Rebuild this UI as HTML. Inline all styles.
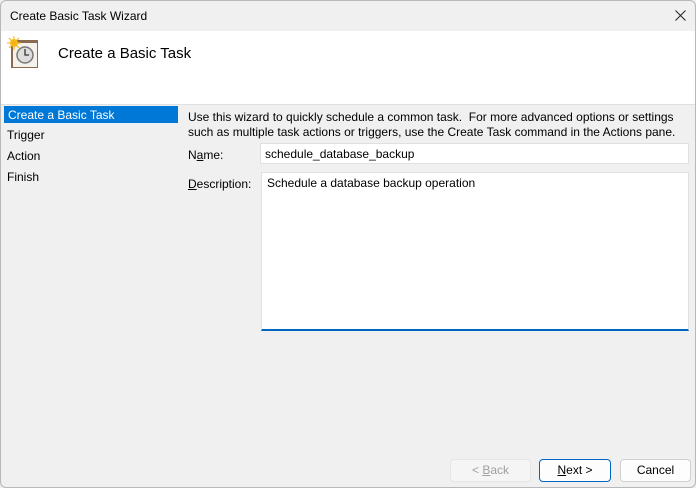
<!DOCTYPE html><html><head><style>
*{margin:0;padding:0;box-sizing:border-box}
body{width:696px;height:488px;font-family:"Liberation Sans",sans-serif;font-size:12px;color:#000;background:#f0f0f0;position:relative;overflow:hidden}
.win{position:absolute;left:0;top:0;width:696px;height:488px;border:1px solid #b8b8b8;border-radius:6px;overflow:hidden;background:#f0f0f0}
.in{position:absolute;left:-1px;top:-1px;width:696px;height:488px}
.t{position:absolute;white-space:nowrap}
.btn{position:absolute;height:23px;border:1px solid #d0d0d0;border-radius:4px;background:#fdfdfd;text-align:center;line-height:21px}
</style></head><body><div class="win"><div class="in">
<div class="t" style="left:10px;top:9px">Create Basic Task Wizard</div>
<svg style="position:absolute;left:675px;top:10px" width="11" height="11" viewBox="0 0 11 11"><path d="M0.5 0.5L10.5 10.5M10.5 0.5L0.5 10.5" stroke="#222" stroke-width="1"/></svg>
<div style="position:absolute;left:0;top:31px;width:696px;height:74px;background:#fff;border-bottom:1px solid #e0e0e0"></div>
<svg style="position:absolute;left:6px;top:36px" width="34" height="34" viewBox="0 0 34 34">
<rect x="5" y="4" width="27" height="28" fill="#8a6a50"/><rect x="7" y="7" width="24" height="24" fill="#f5f2ec"/>
<circle cx="19" cy="19" r="8" fill="#ddd" stroke="#777" stroke-width="1.5"/><path d="M19 13v6h4" stroke="#333" stroke-width="1.3" fill="none"/>
<circle cx="8" cy="7" r="4" fill="#f5c020"/><path d="M8 0v14M1 7h14M3 2l10 10M13 2L3 12" stroke="#f5b010" stroke-width="1"/>
</svg>
<div class="t" style="left:58px;top:45px;font-size:15px">Create a Basic Task</div>
<div style="position:absolute;left:4px;top:106px;width:174px;height:17px;background:#0078d7"></div>
<div class="t" style="left:8px;top:108px;color:#fff">Create a Basic Task</div>
<div class="t" style="left:7px;top:128px">Trigger</div>
<div class="t" style="left:7px;top:149px">Action</div>
<div class="t" style="left:7px;top:170px">Finish</div>
<div class="t" style="left:188px;top:110px;line-height:15px">Use this wizard to quickly schedule a common task.&nbsp; For more advanced options or settings<br>such as multiple task actions or triggers, use the Create Task command in the Actions pane.</div>
<div class="t" style="left:188px;top:148px">N<u>a</u>me:</div>
<div style="position:absolute;left:260px;top:143px;width:429px;height:21px;background:#fff;border:1px solid #e0e0e0"></div>
<div class="t" style="left:265px;top:147px">schedule_database_backup</div>
<div class="t" style="left:188px;top:177px"><u>D</u>escription:</div>
<div style="position:absolute;left:261px;top:172px;width:428px;height:159px;background:#fff;border:1px solid #e0e0e0;border-bottom:2px solid #0067c0"></div>
<div class="t" style="left:267px;top:176px">Schedule a database backup operation</div>
<div class="btn" style="left:450px;top:459px;width:81px;color:#a0a0a0;background:#f5f5f5;border-color:#e5e5e5">&lt; <u>B</u>ack</div>
<div class="btn" style="left:539px;top:459px;width:72px;border-color:#0067c0"><u>N</u>ext &gt;</div>
<div class="btn" style="left:620px;top:459px;width:71px">Cancel</div>
</div></div></body></html>
